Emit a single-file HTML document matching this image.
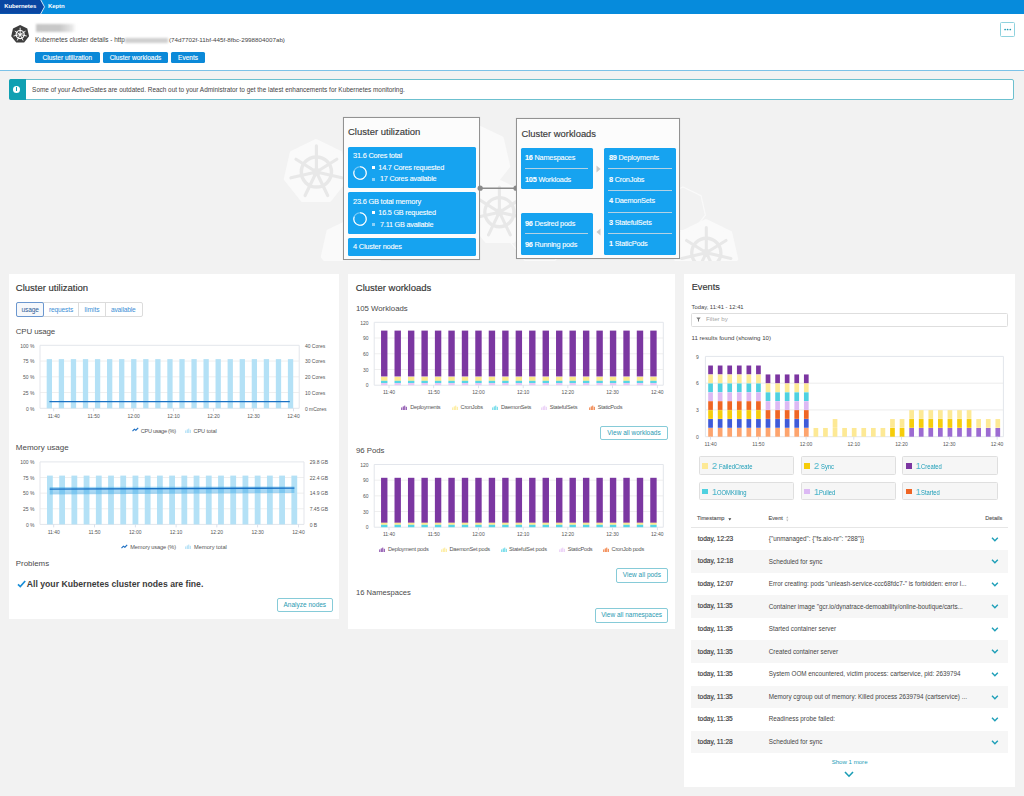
<!DOCTYPE html>
<html><head><meta charset="utf-8">
<style>
*{box-sizing:border-box;margin:0;padding:0}
html,body{width:1024px;height:796px;overflow:hidden;background:#f2f2f2;font-family:"Liberation Sans",sans-serif;color:#454646;position:relative}
.a{position:absolute}
.t{position:absolute;white-space:nowrap;line-height:1}
#topbar{left:0;top:0;width:1024px;height:13.8px;background:#068bdc}
#hdr{left:0;top:13.8px;width:1024px;height:57.2px;background:#fff;border-bottom:1px solid #7cc2e8}
.btn{position:absolute;height:11px;background:#0b89d8;border-radius:1.5px;color:#fff;font-size:6.5px;line-height:11px;text-align:center;-webkit-text-stroke:0.12px #fff}
#info{left:8.5px;top:79px;width:1005.5px;height:21px;background:#fff;border:1px solid #6cc0cf;border-radius:2px}
.panel{position:absolute;background:#fff;top:274px}
.card{position:absolute;background:#fff;border:1px solid #929292;box-shadow:0 0 1px rgba(0,0,0,.15)}
.tile{position:absolute;background:#16a3f0;border-radius:1.5px;color:#fff}
.ptitle{position:absolute;font-size:9px;font-weight:bold;color:#353535;white-space:nowrap;line-height:1}
.sub{position:absolute;font-size:8.5px;color:#555;white-space:nowrap;line-height:1}
.obtn{position:absolute;height:15px;border:1px solid #86cbd8;border-radius:2px;color:#2a9ab2;font-size:6.5px;line-height:13px;text-align:center;background:#fff}
</style></head><body>
<svg width="0" height="0" style="position:absolute">
<defs>
<symbol id="k8s" viewBox="0 0 100 100">
<polygon points="50.00,0.00 89.09,18.83 98.75,61.13 71.69,95.05 28.31,95.05 1.25,61.13 10.91,18.83" stroke-linejoin="round" stroke-width="6" />
<g stroke="#fff" fill="none">
<circle cx="50" cy="52" r="22" stroke-width="6.5"/>
<path d="M50,52 L50.00,17 M50,52 L77.4,34.8 M50,52 L84,59.8 M50,52 L65.2,83 M50,52 L34.8,83 M50,52 L16,59.8 M50,52 L22.6,34.8" stroke-width="5" stroke-linecap="round"/>
</g>
<circle cx="50" cy="52" r="5" fill="#fff"/>
</symbol>
<symbol id="wheel" viewBox="0 0 100 100">
<g stroke="currentColor" fill="none">
<circle cx="50" cy="50" r="26" stroke-width="6"/>
<path d="M50,50 L50.00,5 M50,50 L85.2,28 M50,50 L93.9,60 M50,50 L69.5,90.5 M50,50 L30.5,90.5 M50,50 L6.1,60 M50,50 L14.8,28" stroke-width="5.5" stroke-linecap="round"/>
</g>
<circle cx="50" cy="50" r="7" fill="currentColor"/>
</symbol>
</defs></svg>
<div id="topbar" class="a">
 <svg class="a" style="left:0;top:0" width="60" height="14"><polygon points="0,0 41,0 44.5,6.9 41,13.8 0,13.8" fill="#0a46a2"/><polyline points="40.5,-0.5 44.5,6.9 40.5,14.3" fill="none" stroke="#cfe6f8" stroke-width="1"/></svg>
 <div class="t" style="left:4.2px;top:3.4px;font-size:6px;color:#fff;font-weight:bold;letter-spacing:-0.1px">Kubernetes</div>
 <div class="t" style="left:48px;top:3.4px;font-size:6px;color:#fff;font-weight:bold;letter-spacing:-0.1px">Keptn</div>
</div>
<div id="hdr" class="a">
 <svg class="a" style="left:10.9px;top:11.1px;fill:#3d3d3d" width="18.3" height="18.3"><use href="#k8s"/></svg>
 <div class="a" style="left:35.5px;top:9.9px;width:40px;height:8px;background:linear-gradient(to right,#c6c6c6,#c9c9c9 60%,rgba(215,215,215,0.6) 90%,rgba(240,240,240,0));filter:blur(1.1px)"></div>
 <div class="t" style="left:35px;top:23.6px;font-size:6.4px;color:#454545">Kubernetes cluster details - http</div>
 <div class="a" style="left:125px;top:24.6px;width:43px;height:4.5px;background:#cfcfcf;filter:blur(1.2px)"></div>
 <div class="t" style="left:169px;top:23.6px;font-size:6.25px;color:#454545">(74d7702f-11bf-445f-8fbc-2998804007ab)</div>
 <div class="btn" style="left:35px;top:38.2px;width:64.5px">Cluster utilization</div>
 <div class="btn" style="left:103px;top:38.2px;width:65px">Cluster workloads</div>
 <div class="btn" style="left:171px;top:38.2px;width:34px">Events</div>
 <div class="a" style="left:1000px;top:8.2px;width:15px;height:15px;border:1px solid #8fd2de;border-radius:1.5px"><svg class="a" style="left:0;top:0" width="13" height="13"><circle cx="4.1" cy="6.5" r="0.85" fill="#1a9ab2"/><circle cx="6.6" cy="6.5" r="0.85" fill="#1a9ab2"/><circle cx="9.3" cy="6.5" r="0.85" fill="#1a9ab2"/></svg></div>
</div>
<div id="info" class="a">
 <div class="a" style="left:-1px;top:-1px;width:17px;height:21px;background:#10a0b2;border-radius:2px 0 0 2px"></div>
 <div class="a" style="left:3.6px;top:5.8px;width:7px;height:7px;border-radius:50%;background:#fff"></div>
 <div class="a" style="left:6.6px;top:6.9px;width:1.2px;height:1px;background:#10a0b2"></div>
 <div class="a" style="left:6.6px;top:8.4px;width:1.2px;height:3px;background:#10a0b2"></div>
 <div class="t" style="left:22.6px;top:6.5px;font-size:6.43px;color:#454545">Some of your ActiveGates are outdated. Reach out to your Administrator to get the latest enhancements for Kubernetes monitoring.</div>
</div>

<svg class="a" style="left:0;top:100px" width="1024" height="161">
<g fill="#fafafa" stroke="#fafafa" stroke-width="4" stroke-linejoin="round">
<polygon points="316.0,41.0 340.2,52.7 346.2,78.9 329.5,99.9 302.5,99.9 285.8,78.9 291.8,52.7"/>
<polygon points="476.0,26.0 501.8,38.4 508.2,66.3 490.3,88.7 461.7,88.7 443.8,66.3 450.2,38.4"/>
<polygon points="500.0,82.0 524.2,93.7 530.2,119.9 513.5,140.9 486.5,140.9 469.8,119.9 475.8,93.7"/>
<polygon points="706.0,121.0 730.2,132.7 736.2,158.9 719.5,179.9 692.5,179.9 675.8,158.9 681.8,132.7"/>
<polygon points="352.0,120.0 375.5,131.3 381.2,156.7 365.0,177.0 339.0,177.0 322.8,156.7 328.5,131.3"/>
</g>
<g fill="none" stroke="#fafafa" stroke-width="1.2">
<polygon points="540.0,96.0 566.6,108.8 573.1,137.6 554.8,160.6 525.2,160.6 506.9,137.6 513.4,108.8"/>
<polygon points="683.0,87.0 701.0,95.7 705.4,115.1 693.0,130.7 673.0,130.7 660.6,115.1 665.0,95.7"/>
</g>
<g style="color:#e8e8e8">
<use href="#wheel" x="287.4" y="43.0" width="58" height="58"/>
<use href="#wheel" x="471.4" y="84.2" width="56" height="56"/>
<use href="#wheel" x="678.3" y="124.8" width="56" height="56"/>
</g>
</svg>
<div class="card" style="left:343px;top:117px;width:137px;height:143px;background:#fcfcfc">
 <div class="t" style="left:4px;top:9.4px;font-size:9.5px;color:#3a3a3a;-webkit-text-stroke:0.15px #3a3a3a">Cluster utilization</div>
</div>
<div class="tile" style="left:347.5px;top:147px;width:128.5px;height:41px"></div>
<div class="tile" style="left:347.5px;top:192px;width:128.5px;height:42px"></div>
<div class="tile" style="left:347.5px;top:237.5px;width:128.5px;height:18px"></div>
<div class="t" style="left:353px;top:152.1px;font-size:7.40px;letter-spacing:-0.2px;-webkit-text-stroke:0.1px #fff;color:#fff">31.6 Cores total</div>
<svg class="a" style="left:352.2px;top:165.0px" width="16" height="16" viewBox="0 0 16 16"><circle cx="8" cy="8" r="6.3" fill="none" stroke="rgba(255,255,255,.45)" stroke-width="1.1"/><path d="M8,1.7 A6.3,6.3 0 1 1 2.2,5.6" fill="none" stroke="#fff" stroke-width="1.1"/></svg>
<div class="a" style="left:371.5px;top:166px;width:3px;height:3px;background:#fff"></div>
<div class="t" style="left:378.3px;top:164.1px;font-size:7.25px;letter-spacing:-0.2px;-webkit-text-stroke:0.1px #fff;color:#fff">14.7 Cores requested</div>
<div class="a" style="left:371.5px;top:177.5px;width:3px;height:3px;background:rgba(255,255,255,.5)"></div>
<div class="t" style="left:380px;top:175.2px;font-size:7.25px;letter-spacing:-0.2px;-webkit-text-stroke:0.1px #fff;color:#fff">17 Cores available</div>
<div class="t" style="left:353px;top:197.6px;font-size:7.40px;letter-spacing:-0.2px;-webkit-text-stroke:0.1px #fff;color:#fff">23.6 GB total memory</div>
<svg class="a" style="left:352.2px;top:210.7px" width="16" height="16" viewBox="0 0 16 16"><circle cx="8" cy="8" r="6.3" fill="none" stroke="rgba(255,255,255,.45)" stroke-width="1.1"/><path d="M8,1.7 A6.3,6.3 0 1 1 2.2,5.6" fill="none" stroke="#fff" stroke-width="1.1"/></svg>
<div class="a" style="left:371.5px;top:211px;width:3px;height:3px;background:#fff"></div>
<div class="t" style="left:378.3px;top:209.2px;font-size:7.25px;letter-spacing:-0.2px;-webkit-text-stroke:0.1px #fff;color:#fff">16.5 GB requested</div>
<div class="a" style="left:371.5px;top:222.5px;width:3px;height:3px;background:rgba(255,255,255,.5)"></div>
<div class="t" style="left:380px;top:220.5px;font-size:7.25px;letter-spacing:-0.2px;-webkit-text-stroke:0.1px #fff;color:#fff">7.11 GB available</div>
<div class="t" style="left:353px;top:243.0px;font-size:7.40px;letter-spacing:-0.2px;-webkit-text-stroke:0.1px #fff;color:#fff">4 Cluster nodes</div>

<svg class="a" style="left:476px;top:184px" width="44" height="9"><line x1="4" y1="4.2" x2="40" y2="4.2" stroke="#8a8a8a" stroke-width="1.5"/><circle cx="4.2" cy="4.2" r="2.6" fill="#8a8a8a"/><circle cx="40" cy="4.2" r="2.6" fill="#8a8a8a"/></svg>

<div class="card" style="left:516px;top:117.5px;width:164px;height:141px;background:#fcfcfc">
 <div class="t" style="left:4.5px;top:10.9px;font-size:9.4px;color:#3a3a3a;-webkit-text-stroke:0.15px #3a3a3a">Cluster workloads</div>
</div>
<div class="tile" style="left:521px;top:147.5px;width:71.5px;height:41.5px"></div>
<div class="tile" style="left:521px;top:213px;width:71.5px;height:41.5px"></div>
<div class="tile" style="left:604px;top:147.5px;width:72px;height:107px"></div>
<div class="a" style="left:525px;top:168px;width:63px;height:1px;background:#b4d2e4"></div>
<div class="a" style="left:525px;top:233.2px;width:63px;height:1px;background:#b4d2e4"></div>
<div class="a" style="left:608px;top:168px;width:64px;height:1px;background:#b4d2e4"></div>
<div class="a" style="left:608px;top:190px;width:64px;height:1px;background:#b4d2e4"></div>
<div class="a" style="left:608px;top:212px;width:64px;height:1px;background:#b4d2e4"></div>
<div class="a" style="left:608px;top:233.2px;width:64px;height:1px;background:#b4d2e4"></div>
<div class="t" style="left:525px;top:154.1px;font-size:7.30px;letter-spacing:-0.2px;-webkit-text-stroke:0.1px #fff;color:#fff"><b>16</b> Namespaces</div>
<div class="t" style="left:525px;top:175.6px;font-size:7.30px;letter-spacing:-0.2px;-webkit-text-stroke:0.1px #fff;color:#fff"><b>105</b> Workloads</div>
<div class="t" style="left:525px;top:219.9px;font-size:7.30px;letter-spacing:-0.2px;-webkit-text-stroke:0.1px #fff;color:#fff"><b>96</b> Desired pods</div>
<div class="t" style="left:525px;top:240.6px;font-size:7.30px;letter-spacing:-0.2px;-webkit-text-stroke:0.1px #fff;color:#fff"><b>96</b> Running pods</div>
<div class="t" style="left:609px;top:154.1px;font-size:7.30px;letter-spacing:-0.2px;-webkit-text-stroke:0.1px #fff;color:#fff"><b>89</b> Deployments</div>
<div class="t" style="left:609px;top:175.6px;font-size:7.30px;letter-spacing:-0.2px;-webkit-text-stroke:0.1px #fff;color:#fff"><b>8</b> CronJobs</div>
<div class="t" style="left:609px;top:197.1px;font-size:7.30px;letter-spacing:-0.2px;-webkit-text-stroke:0.1px #fff;color:#fff"><b>4</b> DaemonSets</div>
<div class="t" style="left:609px;top:219.1px;font-size:7.30px;letter-spacing:-0.2px;-webkit-text-stroke:0.1px #fff;color:#fff"><b>3</b> StatefulSets</div>
<div class="t" style="left:609px;top:240.3px;font-size:7.30px;letter-spacing:-0.2px;-webkit-text-stroke:0.1px #fff;color:#fff"><b>1</b> StaticPods</div>
<svg class="a" style="left:595px;top:164px" width="8" height="10"><polygon points="1.5,1.5 5.5,5 1.5,8.5" fill="#c9c9c9"/></svg>
<svg class="a" style="left:595px;top:227px" width="8" height="10"><polygon points="5.5,1.5 1.5,5 5.5,8.5" fill="#c9c9c9"/></svg>

<div class="panel" style="left:9px;width:330px;height:345px"></div>
<div class="panel" style="left:348px;width:327px;height:355px"></div>
<div class="panel" style="left:684px;width:331px;height:513px"></div>
<!--LEFT-->
<svg class="a" style="left:0;top:0" width="1024" height="796"><rect x="40" y="344.8" width="259.2" height="1" fill="#e3e6ec"/><rect x="40" y="360.55" width="259.2" height="1" fill="#efefef"/><rect x="40" y="376.3" width="259.2" height="1" fill="#efefef"/><rect x="40" y="392.05" width="259.2" height="1" fill="#efefef"/><rect x="40" y="407.8" width="259.2" height="1" fill="#e3e6ec"/><rect x="39.5" y="345.3" width="1" height="63" fill="#e3e6ec"/><rect x="298.7" y="345.3" width="1" height="63" fill="#e3e6ec"/><rect x="46.7" y="359.1" width="5.3" height="49.2" fill="#b4e1f6"/><rect x="58.76" y="359.1" width="5.3" height="49.2" fill="#b4e1f6"/><rect x="70.82" y="359.1" width="5.3" height="49.2" fill="#b4e1f6"/><rect x="82.88" y="359.1" width="5.3" height="49.2" fill="#b4e1f6"/><rect x="94.94" y="359.1" width="5.3" height="49.2" fill="#b4e1f6"/><rect x="107" y="359.1" width="5.3" height="49.2" fill="#b4e1f6"/><rect x="119.06" y="359.1" width="5.3" height="49.2" fill="#b4e1f6"/><rect x="131.12" y="359.1" width="5.3" height="49.2" fill="#b4e1f6"/><rect x="143.18" y="359.1" width="5.3" height="49.2" fill="#b4e1f6"/><rect x="155.24" y="359.1" width="5.3" height="49.2" fill="#b4e1f6"/><rect x="167.3" y="359.1" width="5.3" height="49.2" fill="#b4e1f6"/><rect x="179.36" y="359.1" width="5.3" height="49.2" fill="#b4e1f6"/><rect x="191.42" y="359.1" width="5.3" height="49.2" fill="#b4e1f6"/><rect x="203.48" y="359.1" width="5.3" height="49.2" fill="#b4e1f6"/><rect x="215.54" y="359.1" width="5.3" height="49.2" fill="#b4e1f6"/><rect x="227.6" y="359.1" width="5.3" height="49.2" fill="#b4e1f6"/><rect x="239.66" y="359.1" width="5.3" height="49.2" fill="#b4e1f6"/><rect x="251.72" y="359.1" width="5.3" height="49.2" fill="#b4e1f6"/><rect x="263.78" y="359.1" width="5.3" height="49.2" fill="#b4e1f6"/><rect x="275.84" y="359.1" width="5.3" height="49.2" fill="#b4e1f6"/><rect x="287.9" y="359.1" width="5.3" height="49.2" fill="#b4e1f6"/><line x1="49.4" y1="401.6" x2="289.8" y2="401.6" stroke="#1b72c4" stroke-width="1.4"/><rect x="53.35" y="408.3" width="0.8" height="3" fill="#d3dae8"/><rect x="93.3" y="408.3" width="0.8" height="3" fill="#d3dae8"/><rect x="133.25" y="408.3" width="0.8" height="3" fill="#d3dae8"/><rect x="173.2" y="408.3" width="0.8" height="3" fill="#d3dae8"/><rect x="213.15" y="408.3" width="0.8" height="3" fill="#d3dae8"/><rect x="253.1" y="408.3" width="0.8" height="3" fill="#d3dae8"/><rect x="293.05" y="408.3" width="0.8" height="3" fill="#d3dae8"/><rect x="40" y="461.4" width="264" height="1" fill="#e3e6ec"/><rect x="40" y="477.02" width="264" height="1" fill="#efefef"/><rect x="40" y="492.65" width="264" height="1" fill="#efefef"/><rect x="40" y="508.27" width="264" height="1" fill="#efefef"/><rect x="40" y="523.9" width="264" height="1" fill="#e3e6ec"/><rect x="39.5" y="461.9" width="1" height="62.5" fill="#e3e6ec"/><rect x="303.5" y="461.9" width="1" height="62.5" fill="#e3e6ec"/><rect x="47" y="475.6" width="5.8" height="48.8" fill="#b4e1f6"/><rect x="59.22" y="475.6" width="5.8" height="48.8" fill="#b4e1f6"/><rect x="71.44" y="475.6" width="5.8" height="48.8" fill="#b4e1f6"/><rect x="83.66" y="475.6" width="5.8" height="48.8" fill="#b4e1f6"/><rect x="95.88" y="475.6" width="5.8" height="48.8" fill="#b4e1f6"/><rect x="108.1" y="475.6" width="5.8" height="48.8" fill="#b4e1f6"/><rect x="120.32" y="475.6" width="5.8" height="48.8" fill="#b4e1f6"/><rect x="132.54" y="475.6" width="5.8" height="48.8" fill="#b4e1f6"/><rect x="144.76" y="475.6" width="5.8" height="48.8" fill="#b4e1f6"/><rect x="156.98" y="475.6" width="5.8" height="48.8" fill="#b4e1f6"/><rect x="169.2" y="475.6" width="5.8" height="48.8" fill="#b4e1f6"/><rect x="181.42" y="475.6" width="5.8" height="48.8" fill="#b4e1f6"/><rect x="193.64" y="475.6" width="5.8" height="48.8" fill="#b4e1f6"/><rect x="205.86" y="475.6" width="5.8" height="48.8" fill="#b4e1f6"/><rect x="218.08" y="475.6" width="5.8" height="48.8" fill="#b4e1f6"/><rect x="230.3" y="475.6" width="5.8" height="48.8" fill="#b4e1f6"/><rect x="242.52" y="475.6" width="5.8" height="48.8" fill="#b4e1f6"/><rect x="254.74" y="475.6" width="5.8" height="48.8" fill="#b4e1f6"/><rect x="266.96" y="475.6" width="5.8" height="48.8" fill="#b4e1f6"/><rect x="279.18" y="475.6" width="5.8" height="48.8" fill="#b4e1f6"/><rect x="291.4" y="475.6" width="5.8" height="48.8" fill="#b4e1f6"/><polygon points="49.7,487 294.4,486.5 294.4,493 49.7,494.5" fill="rgba(50,165,232,.42)"/><line x1="49.7" y1="489.1" x2="294.4" y2="488.1" stroke="#1b72c4" stroke-width="1.4"/><rect x="53.35" y="524.4" width="0.8" height="3" fill="#d3dae8"/><rect x="94.13" y="524.4" width="0.8" height="3" fill="#d3dae8"/><rect x="134.91" y="524.4" width="0.8" height="3" fill="#d3dae8"/><rect x="175.69" y="524.4" width="0.8" height="3" fill="#d3dae8"/><rect x="216.47" y="524.4" width="0.8" height="3" fill="#d3dae8"/><rect x="257.25" y="524.4" width="0.8" height="3" fill="#d3dae8"/><rect x="298.03" y="524.4" width="0.8" height="3" fill="#d3dae8"/></svg>
<div class="t" style="left:15.8px;top:283.3px;font-size:9.5px;color:#333;-webkit-text-stroke:0.15px #333">Cluster utilization</div>
<div class="a" style="left:15.5px;top:302.2px;width:127px;height:14.7px;border:1px solid #dcdcdc;border-radius:2px"></div>
<div class="a" style="left:78px;top:302.2px;width:1px;height:14.7px;background:#dcdcdc"></div>
<div class="a" style="left:105px;top:302.2px;width:1px;height:14.7px;background:#dcdcdc"></div>
<div class="a" style="left:15.5px;top:302.2px;width:28.5px;height:14.7px;border:1px solid #6b97cf;border-radius:2px;background:#f6f8fb"></div>
<div class="t" style="left:21.6px;top:306.9px;font-size:6.6px;letter-spacing:-0.15px;color:#2e5c96">usage</div>
<div class="t" style="left:49px;top:306.9px;font-size:6.6px;letter-spacing:-0.15px;color:#3c8fd6">requests</div>
<div class="t" style="left:84.5px;top:306.9px;font-size:6.6px;letter-spacing:0px;color:#3c8fd6">limits</div>
<div class="t" style="left:110.9px;top:306.9px;font-size:6.6px;letter-spacing:-0.15px;color:#3c8fd6">available</div>
<div class="t" style="left:15.7px;top:327.6px;font-size:7.9px;letter-spacing:-0.1px;color:#4a4a4a">CPU usage</div>
<div class="t" style="left:18.5px;top:343.5px;width:16px;text-align:right;font-size:5px;color:#555">100 %</div>
<div class="t" style="left:304.9px;top:343.5px;font-size:5px;color:#555">40 Cores</div>
<div class="t" style="left:18.5px;top:359.25px;width:16px;text-align:right;font-size:5px;color:#555">75 %</div>
<div class="t" style="left:304.9px;top:359.25px;font-size:5px;color:#555">30 Cores</div>
<div class="t" style="left:18.5px;top:375px;width:16px;text-align:right;font-size:5px;color:#555">50 %</div>
<div class="t" style="left:304.9px;top:375px;font-size:5px;color:#555">20 Cores</div>
<div class="t" style="left:18.5px;top:390.75px;width:16px;text-align:right;font-size:5px;color:#555">25 %</div>
<div class="t" style="left:304.9px;top:390.75px;font-size:5px;color:#555">10 Cores</div>
<div class="t" style="left:18.5px;top:406.5px;width:16px;text-align:right;font-size:5px;color:#555">0 %</div>
<div class="t" style="left:304.9px;top:406.5px;font-size:5px;color:#555">0 mCores</div>
<div class="t" style="left:43.75px;top:413.6px;width:20px;text-align:center;font-size:5px;color:#555">11:40</div>
<div class="t" style="left:83.7px;top:413.6px;width:20px;text-align:center;font-size:5px;color:#555">11:50</div>
<div class="t" style="left:123.65px;top:413.6px;width:20px;text-align:center;font-size:5px;color:#555">12:00</div>
<div class="t" style="left:163.6px;top:413.6px;width:20px;text-align:center;font-size:5px;color:#555">12:10</div>
<div class="t" style="left:203.55px;top:413.6px;width:20px;text-align:center;font-size:5px;color:#555">12:20</div>
<div class="t" style="left:243.5px;top:413.6px;width:20px;text-align:center;font-size:5px;color:#555">12:30</div>
<div class="t" style="left:283.45px;top:413.6px;width:20px;text-align:center;font-size:5px;color:#555">12:40</div>
<svg class="a" style="left:132px;top:427.2px" width="7" height="5"><polyline points="0.5,4.2 2.4,2.2 3.9,3.2 6.2,0.8" fill="none" stroke="#1b6ec2" stroke-width="1.1"/></svg>
<div class="t" style="left:140.8px;top:428.6px;font-size:5.6px;letter-spacing:-0.3px;color:#555">CPU usage (%)</div>
<svg class="a" style="left:185px;top:428px" width="7" height="5"><rect x="0.30" y="2.40" width="0.95" height="2.60" fill="#a6dcf5"/><rect x="1.80" y="1.40" width="0.95" height="3.60" fill="#a6dcf5"/><rect x="3.30" y="0.60" width="0.95" height="4.40" fill="#a6dcf5"/><rect x="4.80" y="1.80" width="0.95" height="3.20" fill="#a6dcf5"/></svg>
<div class="t" style="left:193.5px;top:428.6px;font-size:5.6px;letter-spacing:-0.1px;color:#555">CPU total</div>
<div class="t" style="left:15.8px;top:443.8px;font-size:8px;color:#4a4a4a">Memory usage</div>
<div class="t" style="left:18.5px;top:460.1px;width:16px;text-align:right;font-size:5px;color:#555">100 %</div>
<div class="t" style="left:309.7px;top:460.1px;font-size:5px;color:#555">29.8 GB</div>
<div class="t" style="left:18.5px;top:475.72px;width:16px;text-align:right;font-size:5px;color:#555">75 %</div>
<div class="t" style="left:309.7px;top:475.72px;font-size:5px;color:#555">22.4 GB</div>
<div class="t" style="left:18.5px;top:491.35px;width:16px;text-align:right;font-size:5px;color:#555">50 %</div>
<div class="t" style="left:309.7px;top:491.35px;font-size:5px;color:#555">14.9 GB</div>
<div class="t" style="left:18.5px;top:506.97px;width:16px;text-align:right;font-size:5px;color:#555">25 %</div>
<div class="t" style="left:309.7px;top:506.97px;font-size:5px;color:#555">7.45 GB</div>
<div class="t" style="left:18.5px;top:522.6px;width:16px;text-align:right;font-size:5px;color:#555">0 %</div>
<div class="t" style="left:309.7px;top:522.6px;font-size:5px;color:#555">0 B</div>
<div class="t" style="left:43.75px;top:530.1px;width:20px;text-align:center;font-size:5px;color:#555">11:40</div>
<div class="t" style="left:84.53px;top:530.1px;width:20px;text-align:center;font-size:5px;color:#555">11:50</div>
<div class="t" style="left:125.31px;top:530.1px;width:20px;text-align:center;font-size:5px;color:#555">12:00</div>
<div class="t" style="left:166.09px;top:530.1px;width:20px;text-align:center;font-size:5px;color:#555">12:10</div>
<div class="t" style="left:206.87px;top:530.1px;width:20px;text-align:center;font-size:5px;color:#555">12:20</div>
<div class="t" style="left:247.65px;top:530.1px;width:20px;text-align:center;font-size:5px;color:#555">12:30</div>
<div class="t" style="left:288.43px;top:530.1px;width:20px;text-align:center;font-size:5px;color:#555">12:40</div>
<svg class="a" style="left:121.3px;top:543.7px" width="7" height="5"><polyline points="0.5,4.2 2.4,2.2 3.9,3.2 6.2,0.8" fill="none" stroke="#1b6ec2" stroke-width="1.1"/></svg>
<div class="t" style="left:130.3px;top:544.9px;font-size:5.6px;letter-spacing:-0.1px;color:#555">Memory usage (%)</div>
<svg class="a" style="left:185px;top:544.1px" width="7" height="5"><rect x="0.30" y="2.40" width="0.95" height="2.60" fill="#a6dcf5"/><rect x="1.80" y="1.40" width="0.95" height="3.60" fill="#a6dcf5"/><rect x="3.30" y="0.60" width="0.95" height="4.40" fill="#a6dcf5"/><rect x="4.80" y="1.80" width="0.95" height="3.20" fill="#a6dcf5"/></svg>
<div class="t" style="left:194px;top:544.9px;font-size:5.7px;color:#555">Memory total</div>
<div class="t" style="left:15.8px;top:560.3px;font-size:7.9px;color:#4a4a4a">Problems</div>
<svg class="a" style="left:16.6px;top:580.2px" width="9" height="8"><polyline points="1,4.3 3.3,6.6 8.2,1" fill="none" stroke="#1a8fd8" stroke-width="1.7"/></svg>
<div class="t" style="left:26.8px;top:580.3px;font-size:8.66px;font-weight:bold;color:#3b3b3b">All your Kubernetes cluster nodes are fine.</div>
<div class="obtn" style="left:276.8px;top:597.6px;width:56px;height:14.3px;line-height:12.3px">Analyze nodes</div>
<!--/LEFT-->
<!--MID-->
<svg class="a" style="left:0;top:0" width="1024" height="796"><rect x="374.2" y="321.8" width="289.1" height="1" fill="#e3e6ec"/><rect x="374.2" y="337.52" width="289.1" height="1" fill="#efefef"/><rect x="374.2" y="353.25" width="289.1" height="1" fill="#efefef"/><rect x="374.2" y="368.98" width="289.1" height="1" fill="#efefef"/><rect x="374.2" y="384.7" width="289.1" height="1" fill="#e3e6ec"/><rect x="373.7" y="322.3" width="1" height="62.9" fill="#e3e6ec"/><rect x="662.8" y="322.3" width="1" height="62.9" fill="#e3e6ec"/><rect x="381.05" y="330.6" width="6.4" height="45.9" fill="#7b37a1"/><rect x="381.05" y="376.9" width="6.4" height="3.9" fill="#fde98c"/><rect x="381.05" y="380.8" width="6.4" height="2.2" fill="#56d5e6"/><rect x="381.05" y="383" width="6.4" height="2.2" fill="#e7c8f6"/><rect x="394.51" y="330.6" width="6.4" height="45.9" fill="#7b37a1"/><rect x="394.51" y="376.9" width="6.4" height="3.9" fill="#fde98c"/><rect x="394.51" y="380.8" width="6.4" height="2.2" fill="#56d5e6"/><rect x="394.51" y="383" width="6.4" height="2.2" fill="#e7c8f6"/><rect x="407.97" y="330.6" width="6.4" height="45.9" fill="#7b37a1"/><rect x="407.97" y="376.9" width="6.4" height="3.9" fill="#fde98c"/><rect x="407.97" y="380.8" width="6.4" height="2.2" fill="#56d5e6"/><rect x="407.97" y="383" width="6.4" height="2.2" fill="#e7c8f6"/><rect x="421.43" y="330.6" width="6.4" height="45.9" fill="#7b37a1"/><rect x="421.43" y="376.9" width="6.4" height="3.9" fill="#fde98c"/><rect x="421.43" y="380.8" width="6.4" height="2.2" fill="#56d5e6"/><rect x="421.43" y="383" width="6.4" height="2.2" fill="#e7c8f6"/><rect x="434.89" y="330.6" width="6.4" height="45.9" fill="#7b37a1"/><rect x="434.89" y="376.9" width="6.4" height="3.9" fill="#fde98c"/><rect x="434.89" y="380.8" width="6.4" height="2.2" fill="#56d5e6"/><rect x="434.89" y="383" width="6.4" height="2.2" fill="#e7c8f6"/><rect x="448.35" y="330.6" width="6.4" height="45.9" fill="#7b37a1"/><rect x="448.35" y="376.9" width="6.4" height="3.9" fill="#fde98c"/><rect x="448.35" y="380.8" width="6.4" height="2.2" fill="#56d5e6"/><rect x="448.35" y="383" width="6.4" height="2.2" fill="#e7c8f6"/><rect x="461.81" y="330.6" width="6.4" height="45.9" fill="#7b37a1"/><rect x="461.81" y="376.9" width="6.4" height="3.9" fill="#fde98c"/><rect x="461.81" y="380.8" width="6.4" height="2.2" fill="#56d5e6"/><rect x="461.81" y="383" width="6.4" height="2.2" fill="#e7c8f6"/><rect x="475.27" y="330.6" width="6.4" height="45.9" fill="#7b37a1"/><rect x="475.27" y="376.9" width="6.4" height="3.9" fill="#fde98c"/><rect x="475.27" y="380.8" width="6.4" height="2.2" fill="#56d5e6"/><rect x="475.27" y="383" width="6.4" height="2.2" fill="#e7c8f6"/><rect x="488.73" y="330.6" width="6.4" height="45.9" fill="#7b37a1"/><rect x="488.73" y="376.9" width="6.4" height="3.9" fill="#fde98c"/><rect x="488.73" y="380.8" width="6.4" height="2.2" fill="#56d5e6"/><rect x="488.73" y="383" width="6.4" height="2.2" fill="#e7c8f6"/><rect x="502.19" y="330.6" width="6.4" height="45.9" fill="#7b37a1"/><rect x="502.19" y="376.9" width="6.4" height="3.9" fill="#fde98c"/><rect x="502.19" y="380.8" width="6.4" height="2.2" fill="#56d5e6"/><rect x="502.19" y="383" width="6.4" height="2.2" fill="#e7c8f6"/><rect x="515.65" y="330.6" width="6.4" height="45.9" fill="#7b37a1"/><rect x="515.65" y="376.9" width="6.4" height="3.9" fill="#fde98c"/><rect x="515.65" y="380.8" width="6.4" height="2.2" fill="#56d5e6"/><rect x="515.65" y="383" width="6.4" height="2.2" fill="#e7c8f6"/><rect x="529.11" y="330.6" width="6.4" height="45.9" fill="#7b37a1"/><rect x="529.11" y="376.9" width="6.4" height="3.9" fill="#fde98c"/><rect x="529.11" y="380.8" width="6.4" height="2.2" fill="#56d5e6"/><rect x="529.11" y="383" width="6.4" height="2.2" fill="#e7c8f6"/><rect x="542.57" y="330.6" width="6.4" height="45.9" fill="#7b37a1"/><rect x="542.57" y="376.9" width="6.4" height="3.9" fill="#fde98c"/><rect x="542.57" y="380.8" width="6.4" height="2.2" fill="#56d5e6"/><rect x="542.57" y="383" width="6.4" height="2.2" fill="#e7c8f6"/><rect x="556.03" y="330.6" width="6.4" height="45.9" fill="#7b37a1"/><rect x="556.03" y="376.9" width="6.4" height="3.9" fill="#fde98c"/><rect x="556.03" y="380.8" width="6.4" height="2.2" fill="#56d5e6"/><rect x="556.03" y="383" width="6.4" height="2.2" fill="#e7c8f6"/><rect x="569.49" y="330.6" width="6.4" height="45.9" fill="#7b37a1"/><rect x="569.49" y="376.9" width="6.4" height="3.9" fill="#fde98c"/><rect x="569.49" y="380.8" width="6.4" height="2.2" fill="#56d5e6"/><rect x="569.49" y="383" width="6.4" height="2.2" fill="#e7c8f6"/><rect x="582.95" y="330.6" width="6.4" height="45.9" fill="#7b37a1"/><rect x="582.95" y="376.9" width="6.4" height="3.9" fill="#fde98c"/><rect x="582.95" y="380.8" width="6.4" height="2.2" fill="#56d5e6"/><rect x="582.95" y="383" width="6.4" height="2.2" fill="#e7c8f6"/><rect x="596.41" y="330.6" width="6.4" height="45.9" fill="#7b37a1"/><rect x="596.41" y="376.9" width="6.4" height="3.9" fill="#fde98c"/><rect x="596.41" y="380.8" width="6.4" height="2.2" fill="#56d5e6"/><rect x="596.41" y="383" width="6.4" height="2.2" fill="#e7c8f6"/><rect x="609.87" y="330.6" width="6.4" height="45.9" fill="#7b37a1"/><rect x="609.87" y="376.9" width="6.4" height="3.9" fill="#fde98c"/><rect x="609.87" y="380.8" width="6.4" height="2.2" fill="#56d5e6"/><rect x="609.87" y="383" width="6.4" height="2.2" fill="#e7c8f6"/><rect x="623.33" y="330.6" width="6.4" height="45.9" fill="#7b37a1"/><rect x="623.33" y="376.9" width="6.4" height="3.9" fill="#fde98c"/><rect x="623.33" y="380.8" width="6.4" height="2.2" fill="#56d5e6"/><rect x="623.33" y="383" width="6.4" height="2.2" fill="#e7c8f6"/><rect x="636.79" y="330.6" width="6.4" height="45.9" fill="#7b37a1"/><rect x="636.79" y="376.9" width="6.4" height="3.9" fill="#fde98c"/><rect x="636.79" y="380.8" width="6.4" height="2.2" fill="#56d5e6"/><rect x="636.79" y="383" width="6.4" height="2.2" fill="#e7c8f6"/><rect x="650.25" y="330.6" width="6.4" height="45.9" fill="#7b37a1"/><rect x="650.25" y="376.9" width="6.4" height="3.9" fill="#fde98c"/><rect x="650.25" y="380.8" width="6.4" height="2.2" fill="#56d5e6"/><rect x="650.25" y="383" width="6.4" height="2.2" fill="#e7c8f6"/><rect x="388.6" y="385.2" width="0.8" height="3" fill="#d3dae8"/><rect x="433.32" y="385.2" width="0.8" height="3" fill="#d3dae8"/><rect x="478.04" y="385.2" width="0.8" height="3" fill="#d3dae8"/><rect x="522.76" y="385.2" width="0.8" height="3" fill="#d3dae8"/><rect x="567.48" y="385.2" width="0.8" height="3" fill="#d3dae8"/><rect x="612.2" y="385.2" width="0.8" height="3" fill="#d3dae8"/><rect x="656.92" y="385.2" width="0.8" height="3" fill="#d3dae8"/><rect x="374.2" y="464" width="289.1" height="1" fill="#e3e6ec"/><rect x="374.2" y="479.68" width="289.1" height="1" fill="#efefef"/><rect x="374.2" y="495.35" width="289.1" height="1" fill="#efefef"/><rect x="374.2" y="511.03" width="289.1" height="1" fill="#efefef"/><rect x="374.2" y="526.7" width="289.1" height="1" fill="#e3e6ec"/><rect x="373.7" y="464.5" width="1" height="62.7" fill="#e3e6ec"/><rect x="662.8" y="464.5" width="1" height="62.7" fill="#e3e6ec"/><rect x="381.05" y="477.8" width="6.4" height="45" fill="#7b37a1"/><rect x="381.05" y="522.8" width="6.4" height="2" fill="#fde98c"/><rect x="381.05" y="524.8" width="6.4" height="2.4" fill="#56d5e6"/><rect x="394.51" y="477.8" width="6.4" height="45" fill="#7b37a1"/><rect x="394.51" y="522.8" width="6.4" height="2" fill="#fde98c"/><rect x="394.51" y="524.8" width="6.4" height="2.4" fill="#56d5e6"/><rect x="407.97" y="477.8" width="6.4" height="45" fill="#7b37a1"/><rect x="407.97" y="522.8" width="6.4" height="2" fill="#fde98c"/><rect x="407.97" y="524.8" width="6.4" height="2.4" fill="#56d5e6"/><rect x="421.43" y="477.8" width="6.4" height="45" fill="#7b37a1"/><rect x="421.43" y="522.8" width="6.4" height="2" fill="#fde98c"/><rect x="421.43" y="524.8" width="6.4" height="2.4" fill="#56d5e6"/><rect x="434.89" y="477.8" width="6.4" height="45" fill="#7b37a1"/><rect x="434.89" y="522.8" width="6.4" height="2" fill="#fde98c"/><rect x="434.89" y="524.8" width="6.4" height="2.4" fill="#56d5e6"/><rect x="448.35" y="477.8" width="6.4" height="45" fill="#7b37a1"/><rect x="448.35" y="522.8" width="6.4" height="2" fill="#fde98c"/><rect x="448.35" y="524.8" width="6.4" height="2.4" fill="#56d5e6"/><rect x="461.81" y="477.8" width="6.4" height="45" fill="#7b37a1"/><rect x="461.81" y="522.8" width="6.4" height="2" fill="#fde98c"/><rect x="461.81" y="524.8" width="6.4" height="2.4" fill="#56d5e6"/><rect x="475.27" y="477.8" width="6.4" height="45" fill="#7b37a1"/><rect x="475.27" y="522.8" width="6.4" height="2" fill="#fde98c"/><rect x="475.27" y="524.8" width="6.4" height="2.4" fill="#56d5e6"/><rect x="488.73" y="477.8" width="6.4" height="45" fill="#7b37a1"/><rect x="488.73" y="522.8" width="6.4" height="2" fill="#fde98c"/><rect x="488.73" y="524.8" width="6.4" height="2.4" fill="#56d5e6"/><rect x="502.19" y="477.8" width="6.4" height="45" fill="#7b37a1"/><rect x="502.19" y="522.8" width="6.4" height="2" fill="#fde98c"/><rect x="502.19" y="524.8" width="6.4" height="2.4" fill="#56d5e6"/><rect x="515.65" y="477.8" width="6.4" height="45" fill="#7b37a1"/><rect x="515.65" y="522.8" width="6.4" height="2" fill="#fde98c"/><rect x="515.65" y="524.8" width="6.4" height="2.4" fill="#56d5e6"/><rect x="529.11" y="477.8" width="6.4" height="45" fill="#7b37a1"/><rect x="529.11" y="522.8" width="6.4" height="2" fill="#fde98c"/><rect x="529.11" y="524.8" width="6.4" height="2.4" fill="#56d5e6"/><rect x="542.57" y="477.8" width="6.4" height="45" fill="#7b37a1"/><rect x="542.57" y="522.8" width="6.4" height="2" fill="#fde98c"/><rect x="542.57" y="524.8" width="6.4" height="2.4" fill="#56d5e6"/><rect x="556.03" y="477.8" width="6.4" height="45" fill="#7b37a1"/><rect x="556.03" y="522.8" width="6.4" height="2" fill="#fde98c"/><rect x="556.03" y="524.8" width="6.4" height="2.4" fill="#56d5e6"/><rect x="569.49" y="477.8" width="6.4" height="45" fill="#7b37a1"/><rect x="569.49" y="522.8" width="6.4" height="2" fill="#fde98c"/><rect x="569.49" y="524.8" width="6.4" height="2.4" fill="#56d5e6"/><rect x="582.95" y="477.8" width="6.4" height="45" fill="#7b37a1"/><rect x="582.95" y="522.8" width="6.4" height="2" fill="#fde98c"/><rect x="582.95" y="524.8" width="6.4" height="2.4" fill="#56d5e6"/><rect x="596.41" y="477.8" width="6.4" height="45" fill="#7b37a1"/><rect x="596.41" y="522.8" width="6.4" height="2" fill="#fde98c"/><rect x="596.41" y="524.8" width="6.4" height="2.4" fill="#56d5e6"/><rect x="609.87" y="477.8" width="6.4" height="45" fill="#7b37a1"/><rect x="609.87" y="522.8" width="6.4" height="2" fill="#fde98c"/><rect x="609.87" y="524.8" width="6.4" height="2.4" fill="#56d5e6"/><rect x="623.33" y="477.8" width="6.4" height="45" fill="#7b37a1"/><rect x="623.33" y="522.8" width="6.4" height="2" fill="#fde98c"/><rect x="623.33" y="524.8" width="6.4" height="2.4" fill="#56d5e6"/><rect x="636.79" y="477.8" width="6.4" height="45" fill="#7b37a1"/><rect x="636.79" y="522.8" width="6.4" height="2" fill="#fde98c"/><rect x="636.79" y="524.8" width="6.4" height="2.4" fill="#56d5e6"/><rect x="650.25" y="477.8" width="6.4" height="45" fill="#7b37a1"/><rect x="650.25" y="522.8" width="6.4" height="2" fill="#fde98c"/><rect x="650.25" y="524.8" width="6.4" height="2.4" fill="#56d5e6"/><rect x="388.6" y="527.2" width="0.8" height="3" fill="#d3dae8"/><rect x="433.32" y="527.2" width="0.8" height="3" fill="#d3dae8"/><rect x="478.04" y="527.2" width="0.8" height="3" fill="#d3dae8"/><rect x="522.76" y="527.2" width="0.8" height="3" fill="#d3dae8"/><rect x="567.48" y="527.2" width="0.8" height="3" fill="#d3dae8"/><rect x="612.2" y="527.2" width="0.8" height="3" fill="#d3dae8"/><rect x="656.92" y="527.2" width="0.8" height="3" fill="#d3dae8"/></svg>
<div class="t" style="left:355.8px;top:283.4px;font-size:9.5px;color:#333;-webkit-text-stroke:0.15px #333">Cluster workloads</div>
<div class="t" style="left:355.9px;top:304.8px;font-size:7.8px;color:#4a4a4a">105 Workloads</div>
<div class="t" style="left:352.6px;top:320.5px;width:16px;text-align:right;font-size:5px;color:#555">120</div>
<div class="t" style="left:352.6px;top:336.22px;width:16px;text-align:right;font-size:5px;color:#555">90</div>
<div class="t" style="left:352.6px;top:351.95px;width:16px;text-align:right;font-size:5px;color:#555">60</div>
<div class="t" style="left:352.6px;top:367.68px;width:16px;text-align:right;font-size:5px;color:#555">30</div>
<div class="t" style="left:352.6px;top:383.4px;width:16px;text-align:right;font-size:5px;color:#555">0</div>
<div class="t" style="left:379px;top:390.3px;width:20px;text-align:center;font-size:5px;color:#555">11:40</div>
<div class="t" style="left:423.72px;top:390.3px;width:20px;text-align:center;font-size:5px;color:#555">11:50</div>
<div class="t" style="left:468.44px;top:390.3px;width:20px;text-align:center;font-size:5px;color:#555">12:00</div>
<div class="t" style="left:513.16px;top:390.3px;width:20px;text-align:center;font-size:5px;color:#555">12:10</div>
<div class="t" style="left:557.88px;top:390.3px;width:20px;text-align:center;font-size:5px;color:#555">12:20</div>
<div class="t" style="left:602.6px;top:390.3px;width:20px;text-align:center;font-size:5px;color:#555">12:30</div>
<div class="t" style="left:647.32px;top:390.3px;width:20px;text-align:center;font-size:5px;color:#555">12:40</div>
<svg class="a" style="left:401.25px;top:404.7px" width="7" height="5"><rect x="0.30" y="2.40" width="0.95" height="2.60" fill="#7b37a1"/><rect x="1.80" y="1.40" width="0.95" height="3.60" fill="#7b37a1"/><rect x="3.30" y="0.60" width="0.95" height="4.40" fill="#7b37a1"/><rect x="4.80" y="1.80" width="0.95" height="3.20" fill="#7b37a1"/></svg>
<div class="t" style="left:410.2px;top:405.36px;font-size:5.6px;letter-spacing:-0.22px;color:#555">Deployments</div>
<svg class="a" style="left:452.3px;top:404.7px" width="7" height="5"><rect x="0.30" y="2.40" width="0.95" height="2.60" fill="#fde98c"/><rect x="1.80" y="1.40" width="0.95" height="3.60" fill="#fde98c"/><rect x="3.30" y="0.60" width="0.95" height="4.40" fill="#fde98c"/><rect x="4.80" y="1.80" width="0.95" height="3.20" fill="#fde98c"/></svg>
<div class="t" style="left:460.6px;top:405.36px;font-size:5.6px;letter-spacing:-0.22px;color:#555">CronJobs</div>
<svg class="a" style="left:492.2px;top:404.7px" width="7" height="5"><rect x="0.30" y="2.40" width="0.95" height="2.60" fill="#56d5e6"/><rect x="1.80" y="1.40" width="0.95" height="3.60" fill="#56d5e6"/><rect x="3.30" y="0.60" width="0.95" height="4.40" fill="#56d5e6"/><rect x="4.80" y="1.80" width="0.95" height="3.20" fill="#56d5e6"/></svg>
<div class="t" style="left:501px;top:405.36px;font-size:5.6px;letter-spacing:-0.22px;color:#555">DaemonSets</div>
<svg class="a" style="left:541px;top:404.7px" width="7" height="5"><rect x="0.30" y="2.40" width="0.95" height="2.60" fill="#e7c8f6"/><rect x="1.80" y="1.40" width="0.95" height="3.60" fill="#e7c8f6"/><rect x="3.30" y="0.60" width="0.95" height="4.40" fill="#e7c8f6"/><rect x="4.80" y="1.80" width="0.95" height="3.20" fill="#e7c8f6"/></svg>
<div class="t" style="left:549.7px;top:405.36px;font-size:5.6px;letter-spacing:-0.22px;color:#555">StatefulSets</div>
<svg class="a" style="left:589.25px;top:404.7px" width="7" height="5"><rect x="0.30" y="2.40" width="0.95" height="2.60" fill="#f0702c"/><rect x="1.80" y="1.40" width="0.95" height="3.60" fill="#f0702c"/><rect x="3.30" y="0.60" width="0.95" height="4.40" fill="#f0702c"/><rect x="4.80" y="1.80" width="0.95" height="3.20" fill="#f0702c"/></svg>
<div class="t" style="left:597.7px;top:405.36px;font-size:5.6px;letter-spacing:-0.22px;color:#555">StaticPods</div>
<div class="obtn" style="left:600.4px;top:425.8px;width:67.3px;height:14.2px;line-height:12.2px">View all workloads</div>
<div class="t" style="left:355.9px;top:447px;font-size:7.8px;color:#4a4a4a">96 Pods</div>
<div class="t" style="left:352.6px;top:462.7px;width:16px;text-align:right;font-size:5px;color:#555">120</div>
<div class="t" style="left:352.6px;top:478.38px;width:16px;text-align:right;font-size:5px;color:#555">90</div>
<div class="t" style="left:352.6px;top:494.05px;width:16px;text-align:right;font-size:5px;color:#555">60</div>
<div class="t" style="left:352.6px;top:509.73px;width:16px;text-align:right;font-size:5px;color:#555">30</div>
<div class="t" style="left:352.6px;top:525.4px;width:16px;text-align:right;font-size:5px;color:#555">0</div>
<div class="t" style="left:379px;top:532.3px;width:20px;text-align:center;font-size:5px;color:#555">11:40</div>
<div class="t" style="left:423.72px;top:532.3px;width:20px;text-align:center;font-size:5px;color:#555">11:50</div>
<div class="t" style="left:468.44px;top:532.3px;width:20px;text-align:center;font-size:5px;color:#555">12:00</div>
<div class="t" style="left:513.16px;top:532.3px;width:20px;text-align:center;font-size:5px;color:#555">12:10</div>
<div class="t" style="left:557.88px;top:532.3px;width:20px;text-align:center;font-size:5px;color:#555">12:20</div>
<div class="t" style="left:602.6px;top:532.3px;width:20px;text-align:center;font-size:5px;color:#555">12:30</div>
<div class="t" style="left:647.32px;top:532.3px;width:20px;text-align:center;font-size:5px;color:#555">12:40</div>
<svg class="a" style="left:379.2px;top:546.8px" width="7" height="5"><rect x="0.30" y="2.40" width="0.95" height="2.60" fill="#7b37a1"/><rect x="1.80" y="1.40" width="0.95" height="3.60" fill="#7b37a1"/><rect x="3.30" y="0.60" width="0.95" height="4.40" fill="#7b37a1"/><rect x="4.80" y="1.80" width="0.95" height="3.20" fill="#7b37a1"/></svg>
<div class="t" style="left:388px;top:547.46px;font-size:5.6px;letter-spacing:-0.2px;color:#555">Deployment pods</div>
<svg class="a" style="left:441px;top:546.8px" width="7" height="5"><rect x="0.30" y="2.40" width="0.95" height="2.60" fill="#fde98c"/><rect x="1.80" y="1.40" width="0.95" height="3.60" fill="#fde98c"/><rect x="3.30" y="0.60" width="0.95" height="4.40" fill="#fde98c"/><rect x="4.80" y="1.80" width="0.95" height="3.20" fill="#fde98c"/></svg>
<div class="t" style="left:449.5px;top:547.46px;font-size:5.6px;letter-spacing:-0.2px;color:#555">DaemonSet pods</div>
<svg class="a" style="left:500.5px;top:546.8px" width="7" height="5"><rect x="0.30" y="2.40" width="0.95" height="2.60" fill="#56d5e6"/><rect x="1.80" y="1.40" width="0.95" height="3.60" fill="#56d5e6"/><rect x="3.30" y="0.60" width="0.95" height="4.40" fill="#56d5e6"/><rect x="4.80" y="1.80" width="0.95" height="3.20" fill="#56d5e6"/></svg>
<div class="t" style="left:509px;top:547.46px;font-size:5.6px;letter-spacing:-0.2px;color:#555">StatefulSet pods</div>
<svg class="a" style="left:559.2px;top:546.8px" width="7" height="5"><rect x="0.30" y="2.40" width="0.95" height="2.60" fill="#e7c8f6"/><rect x="1.80" y="1.40" width="0.95" height="3.60" fill="#e7c8f6"/><rect x="3.30" y="0.60" width="0.95" height="4.40" fill="#e7c8f6"/><rect x="4.80" y="1.80" width="0.95" height="3.20" fill="#e7c8f6"/></svg>
<div class="t" style="left:567.7px;top:547.46px;font-size:5.6px;letter-spacing:-0.2px;color:#555">StaticPods</div>
<svg class="a" style="left:602.9px;top:546.8px" width="7" height="5"><rect x="0.30" y="2.40" width="0.95" height="2.60" fill="#f0702c"/><rect x="1.80" y="1.40" width="0.95" height="3.60" fill="#f0702c"/><rect x="3.30" y="0.60" width="0.95" height="4.40" fill="#f0702c"/><rect x="4.80" y="1.80" width="0.95" height="3.20" fill="#f0702c"/></svg>
<div class="t" style="left:611.6px;top:547.46px;font-size:5.6px;letter-spacing:-0.2px;color:#555">CronJob pods</div>
<div class="obtn" style="left:615.9px;top:568.3px;width:52px;height:14.5px;line-height:12.5px">View all pods</div>
<div class="t" style="left:356px;top:589px;font-size:7.6px;color:#4a4a4a">16 Namespaces</div>
<div class="obtn" style="left:595.3px;top:608.2px;width:72.7px;height:14.5px;line-height:12.5px">View all namespaces</div>
<!--/MID-->
<!--RIGHT-->
<svg class="a" style="left:0;top:0" width="1024" height="796"><rect x="705.4" y="355.9" width="298" height="1" fill="#e3e6ec"/><rect x="705.4" y="382.67" width="298" height="1" fill="#ececec"/><rect x="705.4" y="409.43" width="298" height="1" fill="#ececec"/><rect x="705.4" y="436.2" width="298" height="1" fill="#e3e6ec"/><rect x="704.9" y="356.4" width="1" height="80.3" fill="#e3e6ec"/><rect x="1002.9" y="356.4" width="1" height="80.3" fill="#e3e6ec"/><rect x="708.2" y="427.98" width="4.7" height="8.72" fill="#fda46e"/><rect x="708.2" y="419.06" width="4.7" height="8.72" fill="#3f5ad8"/><rect x="708.2" y="410.13" width="4.7" height="8.72" fill="#f6cd0a"/><rect x="708.2" y="401.21" width="4.7" height="8.72" fill="#ef6524"/><rect x="708.2" y="392.29" width="4.7" height="8.72" fill="#dcb9f4"/><rect x="708.2" y="383.37" width="4.7" height="8.72" fill="#4fd1e0"/><rect x="708.2" y="374.44" width="4.7" height="8.72" fill="#fde995"/><rect x="708.2" y="365.52" width="4.7" height="8.72" fill="#7c36a1"/><rect x="717.78" y="427.98" width="4.7" height="8.72" fill="#fda46e"/><rect x="717.78" y="419.06" width="4.7" height="8.72" fill="#3f5ad8"/><rect x="717.78" y="410.13" width="4.7" height="8.72" fill="#f6cd0a"/><rect x="717.78" y="401.21" width="4.7" height="8.72" fill="#ef6524"/><rect x="717.78" y="392.29" width="4.7" height="8.72" fill="#dcb9f4"/><rect x="717.78" y="383.37" width="4.7" height="8.72" fill="#4fd1e0"/><rect x="717.78" y="374.44" width="4.7" height="8.72" fill="#fde995"/><rect x="717.78" y="365.52" width="4.7" height="8.72" fill="#7c36a1"/><rect x="727.35" y="427.98" width="4.7" height="8.72" fill="#fda46e"/><rect x="727.35" y="419.06" width="4.7" height="8.72" fill="#3f5ad8"/><rect x="727.35" y="410.13" width="4.7" height="8.72" fill="#f6cd0a"/><rect x="727.35" y="401.21" width="4.7" height="8.72" fill="#ef6524"/><rect x="727.35" y="392.29" width="4.7" height="8.72" fill="#dcb9f4"/><rect x="727.35" y="383.37" width="4.7" height="8.72" fill="#4fd1e0"/><rect x="727.35" y="374.44" width="4.7" height="8.72" fill="#fde995"/><rect x="727.35" y="365.52" width="4.7" height="8.72" fill="#7c36a1"/><rect x="736.93" y="427.98" width="4.7" height="8.72" fill="#fda46e"/><rect x="736.93" y="419.06" width="4.7" height="8.72" fill="#3f5ad8"/><rect x="736.93" y="410.13" width="4.7" height="8.72" fill="#f6cd0a"/><rect x="736.93" y="401.21" width="4.7" height="8.72" fill="#ef6524"/><rect x="736.93" y="392.29" width="4.7" height="8.72" fill="#dcb9f4"/><rect x="736.93" y="383.37" width="4.7" height="8.72" fill="#4fd1e0"/><rect x="736.93" y="374.44" width="4.7" height="8.72" fill="#fde995"/><rect x="736.93" y="365.52" width="4.7" height="8.72" fill="#7c36a1"/><rect x="746.5" y="427.98" width="4.7" height="8.72" fill="#fda46e"/><rect x="746.5" y="419.06" width="4.7" height="8.72" fill="#3f5ad8"/><rect x="746.5" y="410.13" width="4.7" height="8.72" fill="#f6cd0a"/><rect x="746.5" y="401.21" width="4.7" height="8.72" fill="#ef6524"/><rect x="746.5" y="392.29" width="4.7" height="8.72" fill="#dcb9f4"/><rect x="746.5" y="383.37" width="4.7" height="8.72" fill="#4fd1e0"/><rect x="746.5" y="374.44" width="4.7" height="8.72" fill="#fde995"/><rect x="746.5" y="365.52" width="4.7" height="8.72" fill="#7c36a1"/><rect x="756.08" y="427.98" width="4.7" height="8.72" fill="#fda46e"/><rect x="756.08" y="419.06" width="4.7" height="8.72" fill="#3f5ad8"/><rect x="756.08" y="410.13" width="4.7" height="8.72" fill="#f6cd0a"/><rect x="756.08" y="401.21" width="4.7" height="8.72" fill="#ef6524"/><rect x="756.08" y="392.29" width="4.7" height="8.72" fill="#dcb9f4"/><rect x="756.08" y="383.37" width="4.7" height="8.72" fill="#4fd1e0"/><rect x="756.08" y="374.44" width="4.7" height="8.72" fill="#fde995"/><rect x="756.08" y="365.52" width="4.7" height="8.72" fill="#7c36a1"/><rect x="765.65" y="427.98" width="4.7" height="8.72" fill="#fda46e"/><rect x="765.65" y="419.06" width="4.7" height="8.72" fill="#3f5ad8"/><rect x="765.65" y="410.13" width="4.7" height="8.72" fill="#ef6524"/><rect x="765.65" y="401.21" width="4.7" height="8.72" fill="#dcb9f4"/><rect x="765.65" y="392.29" width="4.7" height="8.72" fill="#4fd1e0"/><rect x="765.65" y="383.37" width="4.7" height="8.72" fill="#fde995"/><rect x="765.65" y="374.44" width="4.7" height="8.72" fill="#7c36a1"/><rect x="775.23" y="427.98" width="4.7" height="8.72" fill="#fda46e"/><rect x="775.23" y="419.06" width="4.7" height="8.72" fill="#3f5ad8"/><rect x="775.23" y="410.13" width="4.7" height="8.72" fill="#ef6524"/><rect x="775.23" y="401.21" width="4.7" height="8.72" fill="#dcb9f4"/><rect x="775.23" y="392.29" width="4.7" height="8.72" fill="#4fd1e0"/><rect x="775.23" y="383.37" width="4.7" height="8.72" fill="#fde995"/><rect x="775.23" y="374.44" width="4.7" height="8.72" fill="#7c36a1"/><rect x="784.8" y="427.98" width="4.7" height="8.72" fill="#fda46e"/><rect x="784.8" y="419.06" width="4.7" height="8.72" fill="#3f5ad8"/><rect x="784.8" y="410.13" width="4.7" height="8.72" fill="#ef6524"/><rect x="784.8" y="401.21" width="4.7" height="8.72" fill="#dcb9f4"/><rect x="784.8" y="392.29" width="4.7" height="8.72" fill="#4fd1e0"/><rect x="784.8" y="383.37" width="4.7" height="8.72" fill="#fde995"/><rect x="784.8" y="374.44" width="4.7" height="8.72" fill="#7c36a1"/><rect x="794.38" y="427.98" width="4.7" height="8.72" fill="#fda46e"/><rect x="794.38" y="419.06" width="4.7" height="8.72" fill="#3f5ad8"/><rect x="794.38" y="410.13" width="4.7" height="8.72" fill="#ef6524"/><rect x="794.38" y="401.21" width="4.7" height="8.72" fill="#dcb9f4"/><rect x="794.38" y="392.29" width="4.7" height="8.72" fill="#4fd1e0"/><rect x="794.38" y="383.37" width="4.7" height="8.72" fill="#fde995"/><rect x="794.38" y="374.44" width="4.7" height="8.72" fill="#7c36a1"/><rect x="803.95" y="427.98" width="4.7" height="8.72" fill="#fda46e"/><rect x="803.95" y="419.06" width="4.7" height="8.72" fill="#3f5ad8"/><rect x="803.95" y="410.13" width="4.7" height="8.72" fill="#ef6524"/><rect x="803.95" y="401.21" width="4.7" height="8.72" fill="#dcb9f4"/><rect x="803.95" y="392.29" width="4.7" height="8.72" fill="#4fd1e0"/><rect x="803.95" y="383.37" width="4.7" height="8.72" fill="#fde995"/><rect x="803.95" y="374.44" width="4.7" height="8.72" fill="#7c36a1"/><rect x="813.53" y="427.98" width="4.7" height="8.72" fill="#fde995"/><rect x="823.1" y="427.98" width="4.7" height="8.72" fill="#fde995"/><rect x="832.68" y="427.98" width="4.7" height="8.72" fill="#fde995"/><rect x="832.68" y="419.06" width="4.7" height="8.72" fill="#fde995"/><rect x="842.25" y="427.98" width="4.7" height="8.72" fill="#fde995"/><rect x="851.83" y="427.98" width="4.7" height="8.72" fill="#fde995"/><rect x="861.4" y="427.98" width="4.7" height="8.72" fill="#fde995"/><rect x="870.98" y="427.98" width="4.7" height="8.72" fill="#fde995"/><rect x="880.55" y="427.98" width="4.7" height="8.72" fill="#fde995"/><rect x="890.12" y="427.98" width="4.7" height="8.72" fill="#f6cd0a"/><rect x="890.12" y="419.06" width="4.7" height="8.72" fill="#fde995"/><rect x="899.7" y="427.98" width="4.7" height="8.72" fill="#f6cd0a"/><rect x="899.7" y="419.06" width="4.7" height="8.72" fill="#fde995"/><rect x="909.28" y="427.98" width="4.7" height="8.72" fill="#9c6bd2"/><rect x="909.28" y="419.06" width="4.7" height="8.72" fill="#f6cd0a"/><rect x="909.28" y="410.13" width="4.7" height="8.72" fill="#fde995"/><rect x="918.85" y="427.98" width="4.7" height="8.72" fill="#9c6bd2"/><rect x="918.85" y="419.06" width="4.7" height="8.72" fill="#f6cd0a"/><rect x="918.85" y="410.13" width="4.7" height="8.72" fill="#fde995"/><rect x="928.43" y="427.98" width="4.7" height="8.72" fill="#9c6bd2"/><rect x="928.43" y="419.06" width="4.7" height="8.72" fill="#f6cd0a"/><rect x="928.43" y="410.13" width="4.7" height="8.72" fill="#fde995"/><rect x="938" y="427.98" width="4.7" height="8.72" fill="#9c6bd2"/><rect x="938" y="419.06" width="4.7" height="8.72" fill="#f6cd0a"/><rect x="938" y="410.13" width="4.7" height="8.72" fill="#fde995"/><rect x="947.58" y="427.98" width="4.7" height="8.72" fill="#9c6bd2"/><rect x="947.58" y="419.06" width="4.7" height="8.72" fill="#f6cd0a"/><rect x="947.58" y="410.13" width="4.7" height="8.72" fill="#fde995"/><rect x="957.15" y="427.98" width="4.7" height="8.72" fill="#9c6bd2"/><rect x="957.15" y="419.06" width="4.7" height="8.72" fill="#f6cd0a"/><rect x="957.15" y="410.13" width="4.7" height="8.72" fill="#fde995"/><rect x="966.73" y="427.98" width="4.7" height="8.72" fill="#9c6bd2"/><rect x="966.73" y="419.06" width="4.7" height="8.72" fill="#f6cd0a"/><rect x="966.73" y="410.13" width="4.7" height="8.72" fill="#fde995"/><rect x="976.3" y="427.98" width="4.7" height="8.72" fill="#9c6bd2"/><rect x="976.3" y="419.06" width="4.7" height="8.72" fill="#fde995"/><rect x="985.88" y="427.98" width="4.7" height="8.72" fill="#9c6bd2"/><rect x="985.88" y="419.06" width="4.7" height="8.72" fill="#fde995"/><rect x="995.45" y="427.98" width="4.7" height="8.72" fill="#9c6bd2"/><rect x="995.45" y="419.06" width="4.7" height="8.72" fill="#fde995"/><rect x="710.2" y="436.7" width="0.8" height="3" fill="#d3dae8"/><rect x="757.95" y="436.7" width="0.8" height="3" fill="#d3dae8"/><rect x="805.7" y="436.7" width="0.8" height="3" fill="#d3dae8"/><rect x="853.45" y="436.7" width="0.8" height="3" fill="#d3dae8"/><rect x="901.2" y="436.7" width="0.8" height="3" fill="#d3dae8"/><rect x="948.95" y="436.7" width="0.8" height="3" fill="#d3dae8"/><rect x="996.7" y="436.7" width="0.8" height="3" fill="#d3dae8"/></svg>
<div class="t" style="left:691.7px;top:283.1px;font-size:9.2px;color:#333;-webkit-text-stroke:0.15px #333">Events</div>
<div class="t" style="left:691.6px;top:305.1px;font-size:5.8px;color:#454545">Today, 11:41 - 12:41</div>
<div class="a" style="left:691px;top:312.5px;width:317px;height:14.2px;border:1px solid #dedede;border-radius:1.5px"></div>
<svg class="a" style="left:696.2px;top:317px" width="5" height="5"><polygon points="0.3,0.5 4.7,0.5 3,2.6 3,4.6 2,4.6 2,2.6" fill="#7a7a7a"/></svg>
<div class="t" style="left:705.9px;top:316.3px;font-size:6.2px;color:#a5a5a5">Filter by</div>
<div class="t" style="left:691.5px;top:334.9px;font-size:6.1px;color:#454545">11 results found (showing 10)</div>
<div class="t" style="left:693.3px;top:354.6px;width:8px;text-align:center;font-size:5px;color:#555">9</div>
<div class="t" style="left:693.3px;top:381.37px;width:8px;text-align:center;font-size:5px;color:#555">6</div>
<div class="t" style="left:693.3px;top:408.13px;width:8px;text-align:center;font-size:5px;color:#555">3</div>
<div class="t" style="left:693.3px;top:434.9px;width:8px;text-align:center;font-size:5px;color:#555">0</div>
<div class="t" style="left:700.6px;top:442.15px;width:20px;text-align:center;font-size:5px;color:#555">11:40</div>
<div class="t" style="left:748.35px;top:442.15px;width:20px;text-align:center;font-size:5px;color:#555">11:50</div>
<div class="t" style="left:796.1px;top:442.15px;width:20px;text-align:center;font-size:5px;color:#555">12:00</div>
<div class="t" style="left:843.85px;top:442.15px;width:20px;text-align:center;font-size:5px;color:#555">12:10</div>
<div class="t" style="left:891.6px;top:442.15px;width:20px;text-align:center;font-size:5px;color:#555">12:20</div>
<div class="t" style="left:939.35px;top:442.15px;width:20px;text-align:center;font-size:5px;color:#555">12:30</div>
<div class="t" style="left:987.1px;top:442.15px;width:20px;text-align:center;font-size:5px;color:#555">12:40</div>
<div class="a" style="left:698.6px;top:456.1px;width:95.5px;height:18.5px;background:#f6f6f6;border:1px solid #dfdfdf;border-radius:1.5px"></div>
<div class="a" style="left:702.3px;top:462.9px;width:5.8px;height:5.8px;background:#fde995"></div>
<div class="t" style="left:711.8px;top:461px;font-size:9.6px;color:#52b9cb">2</div>
<div class="t" style="left:718.6px;top:464.2px;font-size:6.8px;color:#1d9eb8;transform:scaleX(0.86);transform-origin:0 0">FailedCreate</div>
<div class="a" style="left:800.6px;top:456.1px;width:95.5px;height:18.5px;background:#f6f6f6;border:1px solid #dfdfdf;border-radius:1.5px"></div>
<div class="a" style="left:804.3px;top:462.9px;width:5.8px;height:5.8px;background:#f6cd0a"></div>
<div class="t" style="left:813.8px;top:461px;font-size:9.6px;color:#52b9cb">2</div>
<div class="t" style="left:820.6px;top:464.2px;font-size:6.8px;color:#1d9eb8;transform:scaleX(0.86);transform-origin:0 0">Sync</div>
<div class="a" style="left:902.4px;top:456.1px;width:95.5px;height:18.5px;background:#f6f6f6;border:1px solid #dfdfdf;border-radius:1.5px"></div>
<div class="a" style="left:906.1px;top:462.9px;width:5.8px;height:5.8px;background:#7c36a1"></div>
<div class="t" style="left:915.6px;top:461px;font-size:9.6px;color:#52b9cb">1</div>
<div class="t" style="left:920.9px;top:464.2px;font-size:6.8px;color:#1d9eb8;transform:scaleX(0.86);transform-origin:0 0">Created</div>
<div class="a" style="left:698.6px;top:481.8px;width:95.5px;height:18.5px;background:#f6f6f6;border:1px solid #dfdfdf;border-radius:1.5px"></div>
<div class="a" style="left:702.3px;top:488.6px;width:5.8px;height:5.8px;background:#4fd1e0"></div>
<div class="t" style="left:711.8px;top:486.7px;font-size:9.6px;color:#52b9cb">1</div>
<div class="t" style="left:717.1px;top:489.9px;font-size:6.8px;color:#1d9eb8;transform:scaleX(0.86);transform-origin:0 0">OOMKilling</div>
<div class="a" style="left:800.6px;top:481.8px;width:95.5px;height:18.5px;background:#f6f6f6;border:1px solid #dfdfdf;border-radius:1.5px"></div>
<div class="a" style="left:804.3px;top:488.6px;width:5.8px;height:5.8px;background:#dcb9f4"></div>
<div class="t" style="left:813.8px;top:486.7px;font-size:9.6px;color:#52b9cb">1</div>
<div class="t" style="left:819.1px;top:489.9px;font-size:6.8px;color:#1d9eb8;transform:scaleX(0.86);transform-origin:0 0">Pulled</div>
<div class="a" style="left:902.4px;top:481.8px;width:95.5px;height:18.5px;background:#f6f6f6;border:1px solid #dfdfdf;border-radius:1.5px"></div>
<div class="a" style="left:906.1px;top:488.6px;width:5.8px;height:5.8px;background:#ef6524"></div>
<div class="t" style="left:915.6px;top:486.7px;font-size:9.6px;color:#52b9cb">1</div>
<div class="t" style="left:920.9px;top:489.9px;font-size:6.8px;color:#1d9eb8;transform:scaleX(0.86);transform-origin:0 0">Started</div>
<div class="t" style="left:697px;top:516.1px;font-size:5.6px;color:#555;-webkit-text-stroke:0.12px #555">Timestamp</div>
<svg class="a" style="left:727.5px;top:517.5px" width="4" height="3"><polygon points="0.3,0.3 3.3,0.3 1.8,2.5" fill="#444"/></svg>
<div class="t" style="left:768.5px;top:516.1px;font-size:5.6px;color:#555;-webkit-text-stroke:0.12px #555">Event</div>
<svg class="a" style="left:785.8px;top:516.2px" width="3" height="6"><polygon points="0.2,2.3 2.4,2.3 1.3,0.3" fill="#bbb"/><polygon points="0.2,3.4 2.4,3.4 1.3,5.4" fill="#bbb"/></svg>
<div class="t" style="left:985.2px;top:516.1px;font-size:5.6px;color:#555;-webkit-text-stroke:0.12px #555">Details</div>
<div class="a" style="left:691px;top:527px;width:317px;height:1px;background:#e6e6e6"></div>
<div class="t" style="left:697.7px;top:535.78px;font-size:6.55px;color:#3a3a3a;-webkit-text-stroke:0.16px #3a3a3a">today, 12:23</div>
<div class="t" style="left:768.8px;top:535.93px;font-size:6.3px;color:#454545">{&quot;unmanaged&quot;: {&quot;fs.aio-nr&quot;: &quot;288&quot;}}</div>
<svg class="a" style="left:990.5px;top:536.59px" width="8" height="5"><polyline points="1,0.8 3.9,3.8 6.8,0.8" fill="none" stroke="#1e9fb8" stroke-width="1.4"/></svg>
<div class="a" style="left:691px;top:550.17px;width:317px;height:22.57px;background:#f6f6f6"></div>
<div class="t" style="left:697.7px;top:558.36px;font-size:6.55px;color:#3a3a3a;-webkit-text-stroke:0.16px #3a3a3a">today, 12:18</div>
<div class="t" style="left:768.8px;top:558.5px;font-size:6.3px;color:#454545">Scheduled for sync</div>
<svg class="a" style="left:990.5px;top:559.16px" width="8" height="5"><polyline points="1,0.8 3.9,3.8 6.8,0.8" fill="none" stroke="#1e9fb8" stroke-width="1.4"/></svg>
<div class="t" style="left:697.7px;top:580.92px;font-size:6.55px;color:#3a3a3a;-webkit-text-stroke:0.16px #3a3a3a">today, 12:07</div>
<div class="t" style="left:768.8px;top:581.07px;font-size:6.3px;color:#454545">Error creating: pods &quot;unleash-service-ccc68fdc7-&quot; is forbidden: error l...</div>
<svg class="a" style="left:990.5px;top:581.73px" width="8" height="5"><polyline points="1,0.8 3.9,3.8 6.8,0.8" fill="none" stroke="#1e9fb8" stroke-width="1.4"/></svg>
<div class="a" style="left:691px;top:595.31px;width:317px;height:22.57px;background:#f6f6f6"></div>
<div class="t" style="left:697.7px;top:603.49px;font-size:6.55px;color:#3a3a3a;-webkit-text-stroke:0.16px #3a3a3a">today, 11:35</div>
<div class="t" style="left:768.8px;top:603.64px;font-size:6.3px;color:#454545">Container image &quot;gcr.io/dynatrace-demoability/online-boutique/carts...</div>
<svg class="a" style="left:990.5px;top:604.29px" width="8" height="5"><polyline points="1,0.8 3.9,3.8 6.8,0.8" fill="none" stroke="#1e9fb8" stroke-width="1.4"/></svg>
<div class="t" style="left:697.7px;top:626.06px;font-size:6.55px;color:#3a3a3a;-webkit-text-stroke:0.16px #3a3a3a">today, 11:35</div>
<div class="t" style="left:768.8px;top:626.21px;font-size:6.3px;color:#454545">Started container server</div>
<svg class="a" style="left:990.5px;top:626.87px" width="8" height="5"><polyline points="1,0.8 3.9,3.8 6.8,0.8" fill="none" stroke="#1e9fb8" stroke-width="1.4"/></svg>
<div class="a" style="left:691px;top:640.45px;width:317px;height:22.57px;background:#f6f6f6"></div>
<div class="t" style="left:697.7px;top:648.63px;font-size:6.55px;color:#3a3a3a;-webkit-text-stroke:0.16px #3a3a3a">today, 11:35</div>
<div class="t" style="left:768.8px;top:648.78px;font-size:6.3px;color:#454545">Created container server</div>
<svg class="a" style="left:990.5px;top:649.44px" width="8" height="5"><polyline points="1,0.8 3.9,3.8 6.8,0.8" fill="none" stroke="#1e9fb8" stroke-width="1.4"/></svg>
<div class="t" style="left:697.7px;top:671.2px;font-size:6.55px;color:#3a3a3a;-webkit-text-stroke:0.16px #3a3a3a">today, 11:35</div>
<div class="t" style="left:768.8px;top:671.35px;font-size:6.3px;color:#454545">System OOM encountered, victim process: cartservice, pid: 2639794</div>
<svg class="a" style="left:990.5px;top:672px" width="8" height="5"><polyline points="1,0.8 3.9,3.8 6.8,0.8" fill="none" stroke="#1e9fb8" stroke-width="1.4"/></svg>
<div class="a" style="left:691px;top:685.59px;width:317px;height:22.57px;background:#f6f6f6"></div>
<div class="t" style="left:697.7px;top:693.77px;font-size:6.55px;color:#3a3a3a;-webkit-text-stroke:0.16px #3a3a3a">today, 11:35</div>
<div class="t" style="left:768.8px;top:693.92px;font-size:6.3px;color:#454545">Memory cgroup out of memory: Killed process 2639794 (cartservice) ...</div>
<svg class="a" style="left:990.5px;top:694.57px" width="8" height="5"><polyline points="1,0.8 3.9,3.8 6.8,0.8" fill="none" stroke="#1e9fb8" stroke-width="1.4"/></svg>
<div class="t" style="left:697.7px;top:716.34px;font-size:6.55px;color:#3a3a3a;-webkit-text-stroke:0.16px #3a3a3a">today, 11:35</div>
<div class="t" style="left:768.8px;top:716.49px;font-size:6.3px;color:#454545">Readiness probe failed:</div>
<svg class="a" style="left:990.5px;top:717.14px" width="8" height="5"><polyline points="1,0.8 3.9,3.8 6.8,0.8" fill="none" stroke="#1e9fb8" stroke-width="1.4"/></svg>
<div class="a" style="left:691px;top:730.73px;width:317px;height:22.57px;background:#f6f6f6"></div>
<div class="t" style="left:697.7px;top:738.91px;font-size:6.55px;color:#3a3a3a;-webkit-text-stroke:0.16px #3a3a3a">today, 11:28</div>
<div class="t" style="left:768.8px;top:739.06px;font-size:6.3px;color:#454545">Scheduled for sync</div>
<svg class="a" style="left:990.5px;top:739.72px" width="8" height="5"><polyline points="1,0.8 3.9,3.8 6.8,0.8" fill="none" stroke="#1e9fb8" stroke-width="1.4"/></svg>
<div class="t" style="left:800px;top:758.7px;width:99.2px;text-align:center;font-size:6.1px;color:#1d9eb8">Show 1 more</div>
<svg class="a" style="left:844.2px;top:770.5px" width="10" height="7"><polyline points="1,1 5,5.2 9,1" fill="none" stroke="#1a9db5" stroke-width="1.6"/></svg>
<!--/RIGHT-->
</body></html>
